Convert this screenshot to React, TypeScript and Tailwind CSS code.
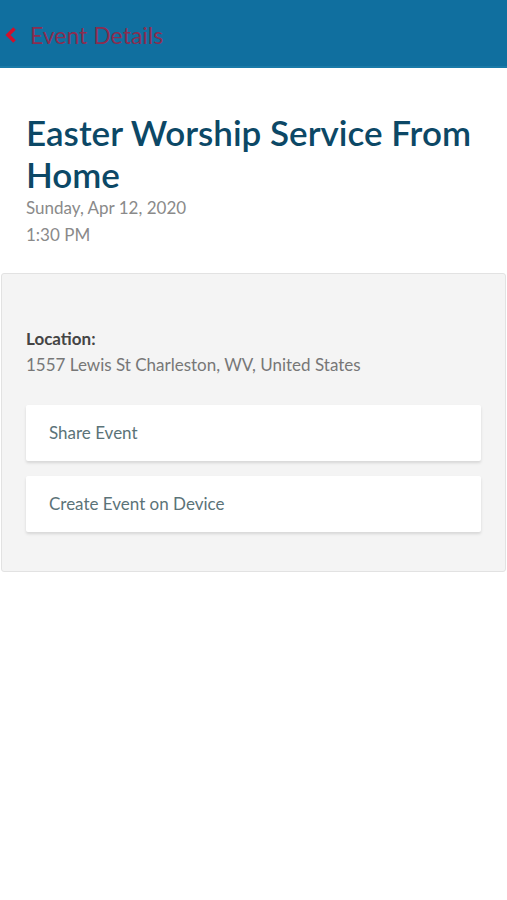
import React from "react";

export default function App() {
  return (
    <div className="min-h-[900px] w-full bg-white" style={{ fontFamily: "Lato, 'Open Sans', sans-serif" }}>
      <div className="h-[68px] bg-[#106f9f] border-b-2 border-[#1a7aa8] flex items-center pt-[4px]">
        <svg width="14" height="18" viewBox="0 0 14 18" className="ml-[4px]">
          <path d="M10.5 2.5 L4 9 L10.5 15.5" stroke="#d0112b" strokeWidth="3.6" fill="none" strokeLinejoin="miter" />
        </svg>
        <span className="ml-[12px] text-[23px] text-[#8a2d50] leading-none">Event Details</span>
      </div>
      <div className="px-[26px] pt-[43px]">
        <h1 className="text-[35px] leading-[42px] font-semibold text-[#0c4866]">Easter Worship Service From Home</h1>
        <div className="text-[17px] leading-[27px] text-[#8a8a8a] -mt-[1px]">Sunday, Apr 12, 2020</div>
        <div className="text-[17px] leading-[27px] text-[#8a8a8a]">1:30 PM</div>
      </div>
      <div className="mx-[1px] mt-[25px] bg-[#f4f4f4] border border-[#e2e2e2] rounded-[3px] px-[24px] pt-[52px] pb-[39px]">
        <div className="text-[17px] leading-[26px] font-bold text-[#444]">Location:</div>
        <div className="text-[17px] leading-[26px] text-[#777]">1557 Lewis St Charleston, WV, United States</div>
        <div className="mt-[27px] flex flex-col gap-[15px]">
          <div className="h-[56px] bg-white rounded-[2px] shadow-[0_2px_3px_rgba(0,0,0,0.12)] flex items-center pl-[23px] text-[17px] text-[#5b7378]">Share Event</div>
          <div className="h-[56px] bg-white rounded-[2px] shadow-[0_2px_3px_rgba(0,0,0,0.12)] flex items-center pl-[23px] text-[17px] text-[#5b7378]">Create Event on Device</div>
        </div>
      </div>
    </div>
  );
}
